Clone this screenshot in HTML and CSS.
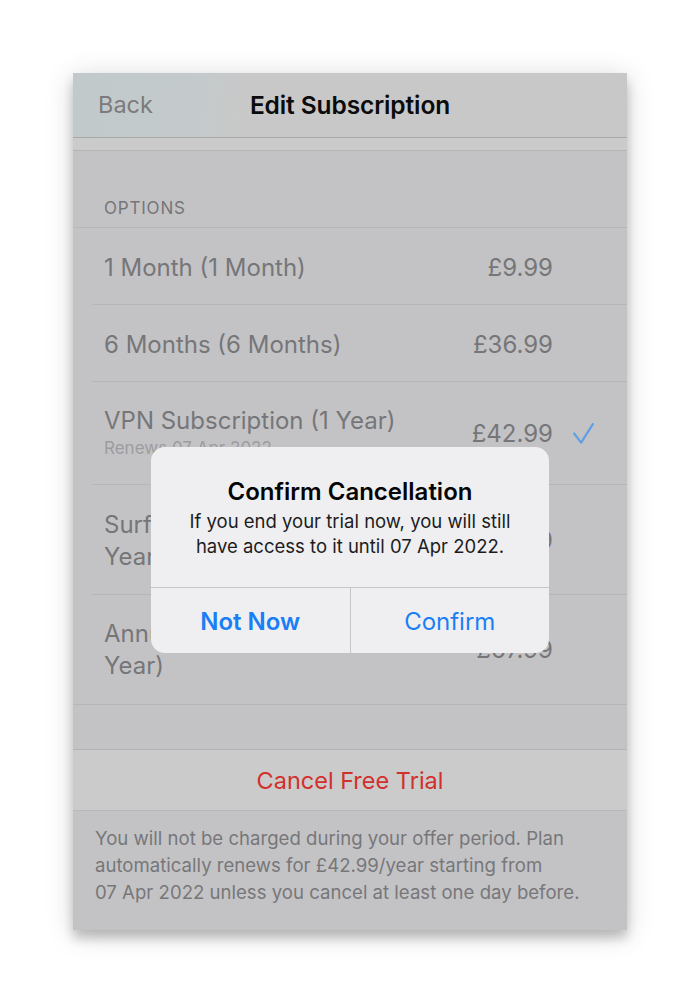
FILE: index.html
```html
<!DOCTYPE html>
<html lang="en">
<head>
<meta charset="utf-8">
<title>Edit Subscription</title>
<link rel="stylesheet" href="styles.css">
</head>
<body>
<div class="card">
  <header class="nav">
    <span class="back">Back</span>
    <span class="title">Edit Subscription</span>
  </header>
  <div class="strip"></div>
  <div class="section-head">OPTIONS</div>
  <ul class="list">
    <li class="row">
      <div class="label"><div class="name">1 Month (1 Month)</div></div>
      <div class="price">£9.99</div>
      <div class="check"></div>
    </li>
    <li class="row">
      <div class="label"><div class="name">6 Months (6 Months)</div></div>
      <div class="price">£36.99</div>
      <div class="check"></div>
    </li>
    <li class="row tall">
      <div class="label">
        <div class="name">VPN Subscription (1 Year)</div>
        <div class="sub">Renews 07 Apr 2022</div>
      </div>
      <div class="price">£42.99</div>
      <div class="check">
        <svg width="21" height="21" viewBox="0 0 22 22"><path d="M1.2 11 L8.5 20.5 L20.8 1.2" fill="none" stroke="#5f9fe3" stroke-width="2.3" stroke-linecap="round" stroke-linejoin="round"/></svg>
      </div>
    </li>
    <li class="row wrap">
      <div class="label"><div class="name narrow">Surfshark One (1<br>Year)</div></div>
      <div class="price">£59.99</div>
      <div class="check"></div>
    </li>
    <li class="row wrap last">
      <div class="label"><div class="name narrow">Annual Plan (1<br>Year)</div></div>
      <div class="price">£67.99</div>
      <div class="check"></div>
    </li>
  </ul>
  <div class="gap"></div>
  <div class="cancel">Cancel Free Trial</div>
  <p class="footer">You will not be charged during your offer period. Plan automatically renews for £42.99/year starting from 07&nbsp;Apr&nbsp;2022 unless you cancel at least one day before.</p>

  <div class="alert">
    <div class="alert-body">
      <div class="alert-title">Confirm Cancellation</div>
      <div class="alert-msg">If you end your trial now, you will still<br>have access to it until 07 Apr 2022.</div>
    </div>
    <div class="alert-actions">
      <div class="btn strong">Not Now</div>
      <div class="btn">Confirm</div>
    </div>
  </div>
</div>
</body>
</html>
```

FILE: styles.css
```css
* { box-sizing: border-box; }
html, body { margin: 0; padding: 0; }
body {
  background: #ffffff;
  font-family: Inter, "Noto Sans", "Liberation Sans", sans-serif;
  width: 700px;
  height: 1005px;
  overflow: hidden;
}
.card {
  position: relative;
  margin: 73px 0 0 73px;
  width: 554px;
  height: 857px;
  background: #c3c3c6;
  overflow: hidden;
  box-shadow: 0 4px 26px rgba(0,0,0,0.17), 0 8px 10px rgba(0,0,0,0.2);
}
.nav {
  height: 65px;
  display: flex;
  align-items: center;
  justify-content: center;
  position: relative;
  background: linear-gradient(100deg, #c1c9cb 0%, #c4cacb 24%, #c8c8c8 31%, #c8c8c8 100%);
  border-bottom: 1px solid #a9a9a9;
}
.back {
  position: absolute;
  left: 25px;
  top: 18px;
  font-size: 23.5px;
  line-height: 28px;
  color: #7b7b7b;
}
.title {
  font-size: 24.5px;
  font-weight: 600;
  color: #0b0b0b;
  letter-spacing: -0.1px;
}
.strip {
  height: 13px;
  background: #cbcbcb;
  border-bottom: 1px solid #b4b4b6;
}
.section-head {
  height: 77px;
  padding: 47px 0 0 31px;
  font-size: 17px;
  line-height: 20px;
  color: #767678;
  letter-spacing: 0.8px;
  border-bottom: 1px solid #b6b6b9;
}
.list {
  list-style: none;
  margin: 0;
  padding: 0;
}
.row {
  display: flex;
  align-items: center;
  height: 77px;
  margin-left: 19px;
  padding-left: 12px;
  padding-top: 3px;
  border-bottom: 1px solid #b6b6b9;
}
.row.tall { height: 103px; padding-top: 1px; }
.row.wrap { height: 110px; padding-top: 2px; }
.row.last { margin-left: 0; padding-left: 31px; padding-top: 0; }
.label { flex: 1; min-width: 0; }
.name {
  font-size: 24px;
  line-height: 26px;
  color: #767678;
}
.row.tall .name { line-height: 24px; }
.name.narrow { line-height: 32px; }
.sub {
  margin-top: 5px;
  font-size: 17px;
  line-height: 20px;
  color: #9c9c9f;
}
.price {
  font-size: 24px;
  line-height: 26px;
  color: #767678;
}
.check {
  width: 74px;
  height: 22px;
  padding-left: 20px;
  display: flex;
  align-items: center;
}
.gap { height: 45px; border-bottom: 1px solid #b4b4b6; }
.cancel {
  height: 61px;
  background: #cbcbcb;
  border-bottom: 1px solid #b8b8ba;
  display: flex;
  align-items: center;
  justify-content: center;
  font-size: 23.5px;
  color: #d2302c;
}
.footer {
  margin: 0;
  padding: 14px 30px 0 22px;
  font-size: 18.6px;
  line-height: 27px;
  color: #777779;
}
.alert {
  position: absolute;
  left: 78px;
  top: 374px;
  width: 398px;
  height: 206px;
  background: #efeff1;
  border-radius: 14px;
  display: flex;
  flex-direction: column;
  overflow: hidden;
}
.alert-body {
  height: 141px;
  padding: 31px 10px 0;
  text-align: center;
  border-bottom: 1px solid #c6c6c9;
}
.alert-title {
  font-size: 24px;
  font-weight: 600;
  line-height: 28px;
  color: #050505;
}
.alert-msg {
  margin-top: 3px;
  font-size: 18.5px;
  line-height: 25px;
  color: #1c1c1e;
}
.alert-actions {
  flex: 1;
  display: flex;
}
.btn {
  flex: 1;
  display: flex;
  align-items: center;
  justify-content: center;
  font-size: 24px;
  color: #1a7ff6;
  padding-top: 2px;
}
.btn + .btn { border-left: 1px solid #c6c6c9; }
.btn.strong { font-weight: 600; }
```
